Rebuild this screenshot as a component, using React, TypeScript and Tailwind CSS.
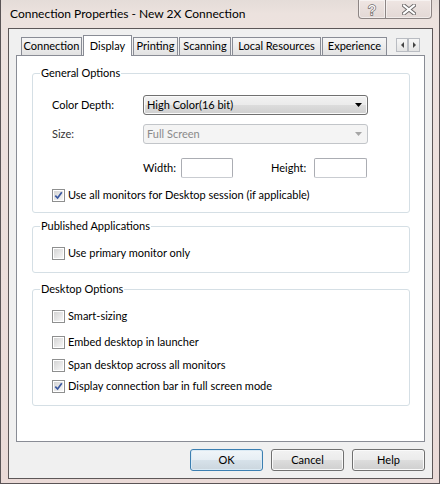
import React from "react";

const font = "font-['Segoe_UI',Lato,sans-serif]";

function CheckBox({ checked }: { checked?: boolean }) {
  return (
    <span className="flex h-[13px] w-[13px] shrink-0 items-center justify-center border border-[#8e8f8f] bg-white">
      <span className="relative h-[11px] w-[11px] border border-white bg-gradient-to-br from-[#d4d4d4] to-[#f7f7f7]">
        {checked && (
          <svg viewBox="0 0 9 9" className="absolute left-0 top-0 h-[9px] w-[9px]">
            <path d="M1.3 4.6 L3.6 7 L7.8 1.2" fill="none" stroke="#3a58a0" strokeWidth="1.7" />
          </svg>
        )}
      </span>
    </span>
  );
}

function CheckRow({ label, checked, className = "" }: { label: string; checked?: boolean; className?: string }) {
  return (
    <div className={`flex h-[16px] items-center ${className}`}>
      <CheckBox checked={checked} />
      <span className="ml-[3px] leading-[16px]">{label}</span>
    </div>
  );
}

function Group({
  title,
  className = "",
  pb = "pb-[10px]",
  children,
}: {
  title: string;
  className?: string;
  pb?: string;
  children: React.ReactNode;
}) {
  return (
    <fieldset className={`rounded-[3px] border border-[#d5dfe5] ${className}`}>
      <legend className="ml-[7px] px-[1px] leading-[16px]">{title}</legend>
      <div className={`pl-[19px] ${pb}`}>{children}</div>
    </fieldset>
  );
}

function Tab({ label, width, selected }: { label: string; width: string; selected?: boolean }) {
  if (selected) {
    return (
      <div
        className={`relative z-10 -mb-[1px] flex h-[21px] items-start justify-center border border-b-0 border-[#898c95] bg-white pt-[2px] ${width}`}
      >
        {label}
      </div>
    );
  }
  return (
    <div
      className={`flex h-[18px] items-center justify-center border border-b-0 border-[#898c95] bg-gradient-to-b from-[#f6f6f6] to-[#e2e2e2] ${width}`}
    >
      {label}
    </div>
  );
}

function Button({ label, primary }: { label: string; primary?: boolean }) {
  return (
    <div
      className={`flex h-[22px] w-[73px] items-center justify-center rounded-[3px] border ${
        primary
          ? "border-[#3c7fb1] bg-[linear-gradient(#f0f5f9_0%,#e6eef4_50%,#d7e2ea_50%,#cbd6de_100%)] shadow-[inset_0_0_0_1px_#dbeaf4]"
          : "border-[#707070] bg-[linear-gradient(#f2f2f2_0%,#ebebeb_50%,#dddddd_50%,#cfcfcf_100%)] shadow-[inset_0_0_0_1px_#fafafa]"
      }`}
    >
      {label}
    </div>
  );
}

export default function App() {
  return (
    <div
      className={`${font} flex h-[484px] w-[440px] flex-col overflow-hidden border-x border-b border-[#5a5456] bg-[linear-gradient(180deg,#e4dcd8_0px,#ece2de_14px,#eee2df_40px,#eadad7_100%)] text-[11px] text-black`}
    >
      {/* title bar */}
      <div className="relative flex h-[28px] shrink-0 items-center pl-[9px]">
        <span className="text-[12px] leading-none">Connection Properties - New 2X Connection</span>
        <div className="absolute right-[7px] top-0 flex h-[19px]">
          <div className="flex w-[28px] items-center justify-center rounded-bl-[4px] border border-t-0 border-[#8d8584] bg-[linear-gradient(#efe6e3,#e3d8d5)] shadow-[inset_0_0_0_1px_rgba(255,255,255,0.5)]">
            <svg width="12" height="15" viewBox="0 0 12 15">
              <text
                x="6"
                y="13"
                textAnchor="middle"
                fontSize="14"
                fontFamily="Liberation Sans, sans-serif"
                fill="#ffffff"
                stroke="#6e6a6a"
                strokeWidth="1.4"
                paintOrder="stroke"
              >
                ?
              </text>
            </svg>
          </div>
          <div className="flex w-[46px] items-center justify-center rounded-br-[4px] border border-l-0 border-t-0 border-[#8d8584] bg-[linear-gradient(#efe6e3,#e3d8d5)] shadow-[inset_0_0_0_1px_rgba(255,255,255,0.5)]">
            <svg width="14" height="11" viewBox="0 0 14 11">
              <path d="M2 1.5 L12 9.5 M12 1.5 L2 9.5" stroke="#6e6a6a" strokeWidth="4" strokeLinecap="square" />
              <path d="M2 1.5 L12 9.5 M12 1.5 L2 9.5" stroke="#ffffff" strokeWidth="2" strokeLinecap="square" />
            </svg>
          </div>
        </div>
      </div>

      {/* client area */}
      <div className="mb-[4px] ml-[7px] mr-[6px] flex flex-1 flex-col border border-[#5d5758] bg-[#f0f0f0] px-[7px] pt-[6px]">
        {/* tab strip */}
        <div className="flex h-[20px] items-end pl-[5px]">
          <div className="flex items-end gap-[1px]">
            <Tab label="Connection" width="w-[61px]" />
            <Tab label="Display" width="w-[49px]" selected />
            <Tab label="Printing" width="w-[45px]" />
            <Tab label="Scanning" width="w-[52px]" />
            <Tab label="Local Resources" width="w-[89px]" />
            <Tab label="Experience" width="w-[65px]" />
          </div>
          <div className="mb-[3px] ml-auto mr-[5px] flex h-[14px]">
            {["M5 2 L2 5 L5 8 Z", "M2 2 L5 5 L2 8 Z"].map((d) => (
              <div
                key={d}
                className="flex w-[12px] items-center justify-center border border-[#b9bcc2] bg-gradient-to-b from-[#f7f7f7] to-[#e4e4e4]"
              >
                <svg width="7" height="10" viewBox="0 0 7 10">
                  <path d={d} fill="#444" />
                </svg>
              </div>
            ))}
          </div>
        </div>

        {/* tab panel */}
        <div className="h-[387px] border border-[#898c95] bg-white pl-[15px] pr-[14px] pt-[9px]">
          <Group title="General Options" pb="pb-[9px]">
            <div className="mt-[14px] flex h-[20px] items-center">
              <span className="w-[91px]">Color Depth:</span>
              <div className="flex h-[20px] w-[225px] items-center justify-between rounded-[3px] border border-[#707070] bg-[linear-gradient(#f2f2f2_0%,#ebebeb_50%,#dddddd_50%,#cfcfcf_100%)] pl-[3px] pr-[5px] shadow-[inset_0_0_0_1px_#fafafa]">
                <span>High Color(16 bit)</span>
                <svg width="7" height="4" viewBox="0 0 7 4">
                  <path d="M0 0 H7 L3.5 4 Z" fill="#000" />
                </svg>
              </div>
            </div>
            <div className="mt-[9px] flex h-[20px] items-center">
              <span className="w-[91px] text-[#333]">Size:</span>
              <div className="flex h-[20px] w-[225px] items-center justify-between rounded-[3px] border border-[#c2c5c9] bg-[#f4f4f4] pl-[3px] pr-[5px] text-[#8a8a8a]">
                <span>Full Screen</span>
                <svg width="7" height="4" viewBox="0 0 7 4">
                  <path d="M0 0 H7 L3.5 4 Z" fill="#a6a6a6" />
                </svg>
              </div>
            </div>
            <div className="mt-[14px] flex h-[20px] items-center">
              <span className="w-[91px]" />
              <span className="w-[38px]">Width:</span>
              <div className="h-[20px] w-[52px] rounded-[2px] border border-[#abadb3] border-b-[#c9ccd1] bg-white" />
              <span className="ml-[38px] w-[43px]">Height:</span>
              <div className="h-[20px] w-[53px] rounded-[2px] border border-[#abadb3] border-b-[#c9ccd1] bg-white" />
            </div>
            <CheckRow className="mt-[9px]" label="Use all monitors for Desktop session (if applicable)" checked />
          </Group>

          <Group title="Published Applications" className="mt-[5px]" pb="pb-[11px]">
            <CheckRow className="mt-[11px]" label="Use primary monitor only" />
          </Group>

          <Group title="Desktop Options" className="mt-[8px]" pb="pb-[11px]">
            <CheckRow className="mt-[11px]" label="Smart-sizing" />
            <CheckRow className="mt-[10px]" label="Embed desktop in launcher" />
            <CheckRow className="mt-[7px]" label="Span desktop across all monitors" />
            <CheckRow className="mt-[5px]" label="Display connection bar in full screen mode" checked />
          </Group>
        </div>

        {/* buttons */}
        <div className="mt-[7px] flex justify-end gap-[8px]">
          <Button label="OK" primary />
          <Button label="Cancel" />
          <Button label="Help" />
        </div>
      </div>
    </div>
  );
}
